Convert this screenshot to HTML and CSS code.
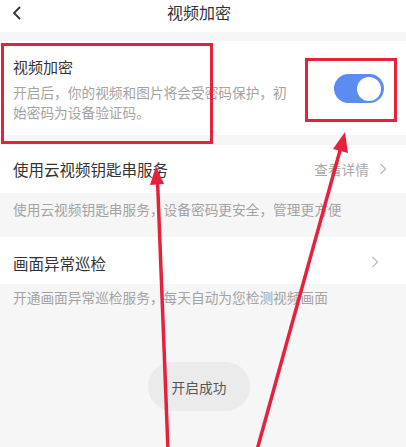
FILE: index.html
```html
<!DOCTYPE html>
<html lang="zh-CN">
<head>
<meta charset="utf-8">
<link rel="stylesheet" href="styles.css">
</head>
<body>
<div class="page">
  <header class="topbar">
    <svg class="back" width="12" height="16" viewBox="0 0 12 16"><path d="M9 2 L3 8 L9 14" fill="none" stroke="#333" stroke-width="1.8"/></svg>
    <div class="title">视频加密</div>
  </header>
  <div class="band"></div>
  <section class="enc">
    <div class="enc-text">
      <div class="enc-title">视频加密</div>
      <div class="enc-desc">开启后，你的视频和图片将会受密码保护，初始密码为设备验证码。</div>
    </div>
    <div class="toggle"><span class="knob"></span></div>
  </section>
  <div class="band band2"></div>
  <div class="row row2">
    <span class="row-title">使用云视频钥匙串服务</span>
    <span class="row-right">查看详情<svg class="chev" width="8" height="12" viewBox="0 0 8 12"><path d="M1.5 1 L6.5 6 L1.5 11" fill="none" stroke="#bdbdbd" stroke-width="1.3"/></svg></span>
  </div>
  <div class="desc desc2">使用云视频钥匙串服务，设备密码更安全，管理更方便</div>
  <div class="row row3">
    <span class="row-title">画面异常巡检</span>
    <span class="row-right"><svg class="chev" width="8" height="12" viewBox="0 0 8 12"><path d="M1.5 1 L6.5 6 L1.5 11" fill="none" stroke="#bdbdbd" stroke-width="1.3"/></svg></span>
  </div>
  <div class="desc desc3">开通画面异常巡检服务，每天自动为您检测视频画面</div>

  <div class="toast">开启成功</div>

  <svg class="annot" width="406" height="447" viewBox="0 0 406 447">
    <rect x="2.5" y="44.5" width="209" height="98" fill="none" stroke="#e5223c" stroke-width="3"/>
    <rect x="306.5" y="59.5" width="89" height="61" fill="none" stroke="#e5223c" stroke-width="3"/>
    <line x1="168" y1="450" x2="157.5" y2="180" stroke="#e5223c" stroke-width="3.5"/>
    <polygon points="156,166 150,185 164,184" fill="#e5223c"/>
    <line x1="257" y1="450" x2="341" y2="147" stroke="#e5223c" stroke-width="3.5"/>
    <polygon points="345,132 333,149 348,153" fill="#e5223c"/>
  </svg>
</div>
</body>
</html>
```
FILE: styles.css
```css
html, body {
  margin: 0;
  padding: 0;
}
body {
  width: 406px;
  height: 447px;
  overflow: hidden;
  background: #f6f6f6;
  font-family: "Noto Sans CJK SC", "Noto Sans", sans-serif;
}
.page {
  position: relative;
  width: 406px;
  height: 447px;
  overflow: hidden;
}
.topbar {
  height: 32px;
  background: #fff;
  display: flex;
  align-items: center;
  position: relative;
}
.back {
  margin-left: 11px;
  margin-top: -6px;
}
.title {
  position: absolute;
  left: 0;
  right: 8px;
  top: 1px;
  text-align: center;
  font-size: 16px;
  line-height: 22px;
  color: #333;
}
.band {
  height: 9px;
  background: #f6f6f6;
}
.band2 {
  height: 10px;
}
.enc {
  background: #fff;
  display: flex;
  align-items: flex-start;
  justify-content: space-between;
  padding: 16px 22px 13px 13px;
  height: 65px;
}
.enc-text {
  width: 280px;
}
.enc-title {
  font-size: 15px;
  line-height: 20px;
  color: #333;
}
.enc-desc {
  margin-top: 5px;
  font-size: 13.7px;
  line-height: 20px;
  color: #a3a3a3;
}
.toggle {
  margin-top: 17px;
  width: 50px;
  height: 29px;
  border-radius: 15px;
  background: #5a8cf2;
  position: relative;
}
.knob {
  position: absolute;
  right: 3px;
  top: 2.5px;
  width: 24px;
  height: 24px;
  border-radius: 50%;
  background: #fff;
}
.row {
  background: #fff;
  display: flex;
  align-items: center;
  justify-content: space-between;
  padding-left: 13px;
}
.row2 {
  height: 48px;
  padding-right: 19px;
}
.row3 {
  height: 47px;
  padding-right: 27px;
}
.row-title {
  font-size: 15.5px;
  color: #333;
  line-height: 20px;
}
.row3 .row-title {
  margin-top: 4px;
}
.row-right {
  display: flex;
  align-items: center;
  font-size: 13.7px;
  color: #a8a8a8;
}
.chev {
  margin-left: 10px;
}
.row3 .chev {
  margin-top: 2px;
}
.desc {
  font-size: 13.7px;
  line-height: 20px;
  color: #a3a3a3;
  padding-left: 13px;
}
.desc2 {
  height: 44px;
  box-sizing: border-box;
  padding-top: 6px;
}
.desc3 {
  padding-top: 3px;
}
.toast {
  position: absolute;
  left: 148px;
  top: 362px;
  width: 102px;
  height: 49px;
  border-radius: 25px;
  background: #ebebeb;
  color: #555;
  font-size: 13.7px;
  display: flex;
  align-items: center;
  justify-content: center;
}
.annot {
  position: absolute;
  left: 0;
  top: 0;
}
```
